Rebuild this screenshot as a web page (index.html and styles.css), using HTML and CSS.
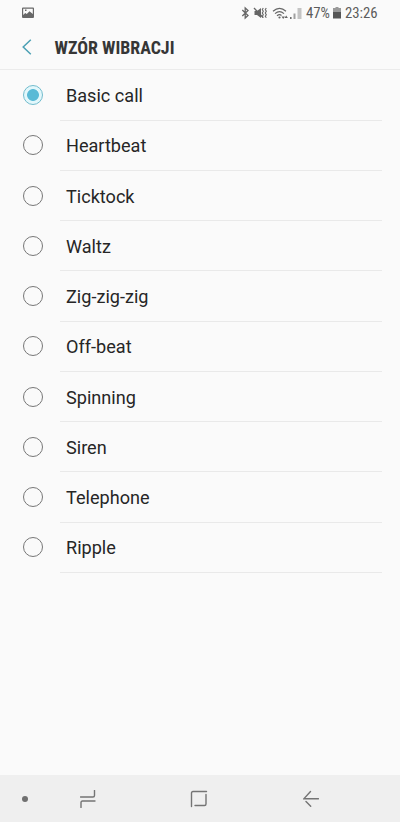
FILE: index.html
```html
<!DOCTYPE html>
<html lang="pl">
<head>
<meta charset="utf-8">
<title>Wzór wibracji</title>
<link rel="stylesheet" href="styles.css">
</head>
<body>
<div class="screen">
  <div class="status">
    <svg class="status-photo" width="12" height="12" viewBox="0 0 12 12"><path fill="#686868" fill-rule="evenodd" d="M1 .5h10q1 0 1 1v8.500q0 1-1 1H1q-1 0-1-1v-8.500q0-1 1-1zM1.200 1.700v6.200l2-2 1.600 1.200 2.700-2.800 3.300 2.700V1.700zM3 2.500h1.500V4H3z"/></svg>
    <svg class="status-icons" width="62" height="16" viewBox="0 0 62 16" fill="none" stroke="#666">
      <path stroke-width="1.300" d="M1.300 5l5.700 5.500L4.200 13V3L7 5.500 1.300 11"/>
      <path fill="#666" stroke="none" d="M13.500 6h2.500L20 3v10l-4-3h-2.500z"/>
      <path stroke-width="1.300" d="M13 3l9 9.500"/>
      <path stroke-width="1.100" d="M22.300 3l-1 1.500 1 1.700-1 1.800 1 1.700-1 1.500 1 1.500M25.300 3l-1 1.500 1 1.700-1 1.800 1 1.700-1 1.500 1 1.500"/>
      <path stroke-width="1.200" d="M32 6.200q6.500-5.500 13 0M34 8.600q4.500-3.800 9 0M36 10.800q2.500-2 4.500-.3"/>
      <circle cx="38.500" cy="12.500" r="1.100" fill="#666" stroke="none"/>
      <path fill="#666" stroke="none" d="M40.500 11.500h3.400l-1.700 2.500zM43.500 13h3.400l-1.700-2.500z"/>
      <path stroke-width="1.500" d="M49.800 12v2"/>
      <path stroke="#a0a0a0" stroke-width="2" d="M53.500 8.500V14"/>
      <path stroke="#c4c4c4" stroke-width="4" d="M58.500 3v11"/>
    </svg>
    <span class="narrow percent">47%</span>
    <svg class="battery" width="8" height="12" viewBox="0 0 8 12"><path fill="#999" d="M2.500 0h3v1H8v5H0V1h2.500z"/><path fill="#555" d="M0 5h8v6.500H0z"/></svg>
    <span class="narrow clock">23:26</span>
  </div>
  <div class="header">
    <svg class="back" width="10" height="16" viewBox="0 0 10 16"><path d="M8.800 .8L1.200 8l7.600 7.200" fill="none" stroke="#4ba0b4" stroke-width="1.500"/></svg>
    <h1 class="narrow title">WZÓR WIBRACJI</h1>
  </div>
  <div class="list">
    <div class="row"><span class="radio on"></span><span class="label">Basic call</span></div>
    <div class="row"><span class="radio"></span><span class="label">Heartbeat</span></div>
    <div class="row"><span class="radio"></span><span class="label">Ticktock</span></div>
    <div class="row"><span class="radio"></span><span class="label">Waltz</span></div>
    <div class="row"><span class="radio"></span><span class="label">Zig-zig-zig</span></div>
    <div class="row"><span class="radio"></span><span class="label">Off-beat</span></div>
    <div class="row"><span class="radio"></span><span class="label">Spinning</span></div>
    <div class="row"><span class="radio"></span><span class="label">Siren</span></div>
    <div class="row"><span class="radio"></span><span class="label">Telephone</span></div>
    <div class="row"><span class="radio"></span><span class="label">Ripple</span></div>
  </div>
  <div class="nav">
    <span class="dot"></span>
    <svg class="recents" width="16" height="18" viewBox="0 0 16 18"><path d="M.5 7H13q1.500 0 1.500-1.500V.5M15 11H2.500Q1 11 1 12.500V17.500"/></svg>
    <svg class="home" width="18" height="18" viewBox="0 0 18 18"><path d="M1.500 16.500V3q0-1.500 1.500-1.500h13.500M16 4.500V14q0 1.500-1.500 1.500H5"/></svg>
    <svg class="return" width="16" height="18" viewBox="0 0 16 18"><path d="M7.500 1.500L.8 8.800H15.500M3 11.500l4.700 4.800"/></svg>
  </div>
</div>
</body>
</html>
```
FILE: styles.css
```css
body { margin: 0; font-family: Roboto, "Liberation Sans", sans-serif; }
.screen { width: 400px; height: 822px; display: flex; flex-direction: column; background: #fafafa; }
svg { display: block; flex: none; }
.narrow { display: block; font-family: "Roboto Condensed", Roboto, sans-serif; font-stretch: 75%; white-space: nowrap; }
.status { height: 26px; flex: none; display: flex; align-items: center; color: #5c5c5c; font-size: 14.800px; }
.status-photo { margin: 0 0 1px 22px; }
.status-icons { margin-left: 207px; margin-right: 3px; margin-bottom: 1px; }
.percent { width: 24px; }
.battery { margin-left: 3px; margin-right: 4px; margin-bottom: 1px; }
.header { height: 43px; flex: none; display: flex; align-items: center; border-bottom: 1px solid #ebebeb; }
.back { margin-left: 22px; margin-bottom: 1px; }
.title { margin: 0 0 0 22.500px; padding-top: 1px; font-size: 17.900px; line-height: 22px; font-weight: 700; color: #363636; }
.list { padding-top: .6px; }
.row { height: 50.220px; box-sizing: border-box; display: flex; align-items: center; padding-left: 23px; background: linear-gradient(#e9e9e9, #e9e9e9) 60px 100% / 322px 1px no-repeat; }
.radio { box-sizing: border-box; width: 20px; height: 20px; margin-bottom: 1px; border: 1.500px solid #777; border-radius: 50%; }
.radio.on { border-color: #72bccd; background: radial-gradient(circle, #59bad6 5.500px, #e2f7fb 6.300px); }
.label { margin-left: 23px; padding-top: 1px; font-size: 18.100px; line-height: 24px; color: #262626; }
.nav { height: 47px; flex: none; margin-top: auto; display: flex; align-items: center; background: #efefef; }
.nav path { fill: none; stroke: #747474; stroke-width: 1.400; stroke-linecap: round; }
.dot { width: 6px; height: 6px; margin-left: 22px; border-radius: 50%; background: #707070; }
.recents { margin-left: 52px; }
.home { margin-left: 94px; }
.return { margin-left: 95px; }
```
